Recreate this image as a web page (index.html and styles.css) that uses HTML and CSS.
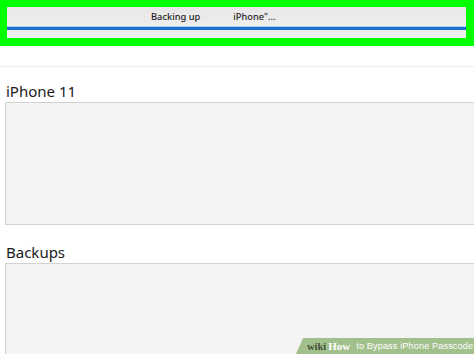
FILE: index.html
```html
<!DOCTYPE html>
<html>
<head>
<meta charset="utf-8">
<link rel="stylesheet" href="styles.css">
</head>
<body>
<div class="frame">
  <div class="dialog">
    <div class="title"><span>Backing up</span><span class="name">iPhone"...</span></div>
    <div class="progress"></div>
  </div>
</div>
<div class="content">
  <div class="sep"></div>
  <h2 class="heading first">iPhone 11</h2>
  <div class="panel p1"></div>
  <h2 class="heading">Backups</h2>
  <div class="panel p2"></div>
</div>
<div class="wm"><span class="wiki">wiki</span><span class="how">How</span><span class="txt">to Bypass iPhone Passcode</span></div>
</body>
</html>
```
FILE: styles.css
```css
html, body { margin: 0; padding: 0; }
body {
  width: 474px;
  height: 354px;
  overflow: hidden;
  background: #fff;
  font-family: "Noto Sans", "Open Sans", sans-serif;
  position: relative;
}
.frame {
  background: #00ff00;
  padding: 7px 8px 8px 7px;
  height: 31px;
}
.dialog {
  height: 31px;
  background: linear-gradient(#e8e8e8, #f0f0f0);
  display: flex;
  flex-direction: column;
}
.title {
  height: 19px;
  display: flex;
  justify-content: flex-start;
  align-items: center;
  font-size: 9.3px;
  font-weight: 500;
  color: #1e1e1e;
  padding-left: 144px;
  gap: 33px;
}
.progress {
  height: 3px;
  background: #1f6fd3;
  border-top: 1px solid #a9d2f3;
}
.content {
  display: flex;
  flex-direction: column;
  padding-left: 5px;
}
.sep {
  height: 1px;
  background: #ececec;
  margin: 20px 0 0 -5px;
}
.heading {
  margin: 0;
  font-weight: normal;
  font-size: 15px;
  line-height: 20px;
  color: #1a1a1a;
  padding-left: 1px;
}
.heading.first { margin-top: 14px; }
.panel {
  background: #f4f4f4;
  border: 1px solid #d2d2d2;
  border-right: none;
  box-sizing: border-box;
}
.p1 { height: 123px; margin-top: 1px; margin-bottom: 17px; }
.p2 { height: 100px; margin-top: 1px; }
.wm {
  position: absolute;
  right: 0;
  bottom: 0;
  height: 16px;
  width: 178px;
  background: #a2c08c;
  clip-path: polygon(7px 0, 100% 0, 100% 100%, 0 100%);
  display: flex;
  align-items: center;
  padding-left: 11px;
  box-sizing: border-box;
  color: #fff;
  white-space: nowrap;
}
.wiki { font-family: "Liberation Serif", serif; font-weight: bold; color: #45503a; font-size: 10.5px; }
.how { font-family: "Liberation Serif", serif; font-weight: bold; font-size: 11px; margin-left: 2px; margin-right: 6px; }
.txt { font-family: "Liberation Sans", sans-serif; font-size: 9.2px; letter-spacing: 0.1px; }
```
